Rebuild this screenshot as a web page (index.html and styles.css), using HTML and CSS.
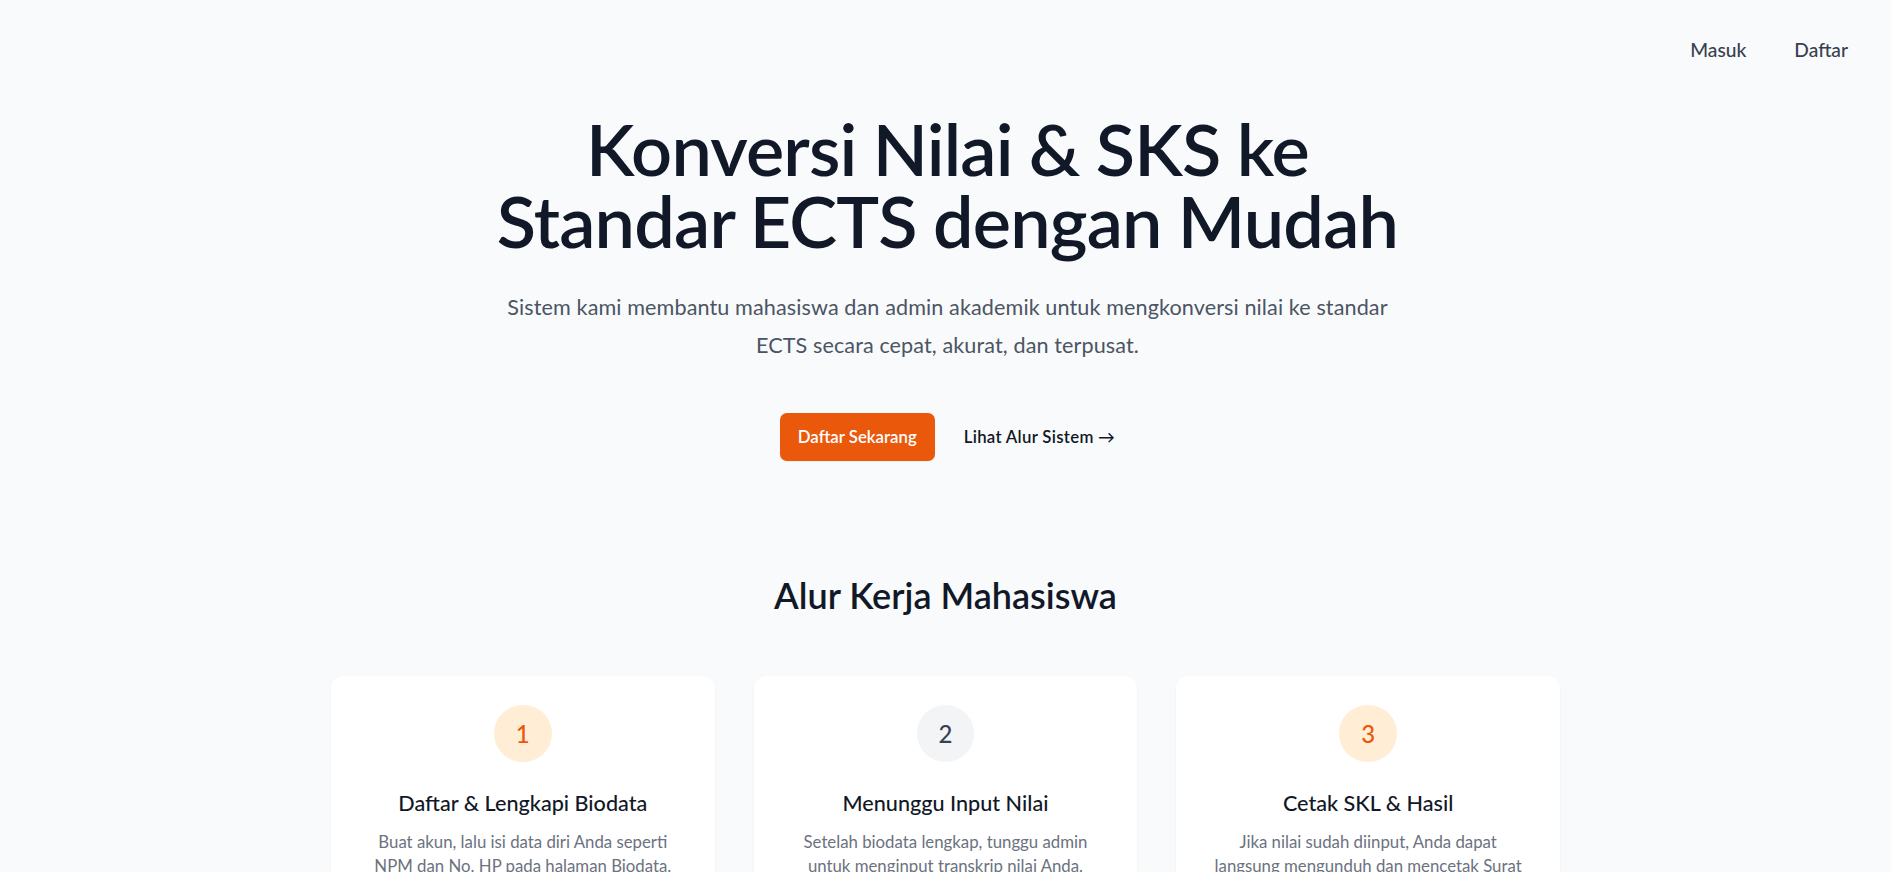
FILE: index.html
```html
<!DOCTYPE html>
<html lang="id">
<head>
<meta charset="utf-8">
<title>Konversi Nilai ECTS</title>
<link rel="stylesheet" href="styles.css">
</head>
<body>
<header class="topbar">
  <nav class="nav">
    <a href="#" class="nav-link">Masuk</a>
    <a href="#" class="nav-link">Daftar</a>
  </nav>
</header>
<main>
  <section class="hero">
    <h1 class="hero-title">Konversi Nilai &amp; SKS ke<br>Standar ECTS dengan Mudah</h1>
    <p class="hero-text">Sistem kami membantu mahasiswa dan admin akademik untuk mengkonversi nilai ke standar ECTS secara cepat, akurat, dan terpusat.</p>
    <div class="hero-actions">
      <a href="#" class="btn-primary">Daftar Sekarang</a>
      <a href="#alur" class="btn-link">Lihat Alur Sistem →</a>
    </div>
  </section>
  <section class="flow" id="alur">
    <h2 class="flow-title">Alur Kerja Mahasiswa</h2>
    <div class="flow-grid">
      <div class="card">
        <div class="step step-accent">1</div>
        <h3 class="card-title">Daftar &amp; Lengkapi Biodata</h3>
        <p class="card-text">Buat akun, lalu isi data diri Anda seperti NPM dan No. HP pada halaman Biodata.</p>
      </div>
      <div class="card">
        <div class="step step-muted">2</div>
        <h3 class="card-title">Menunggu Input Nilai</h3>
        <p class="card-text">Setelah biodata lengkap, tunggu admin untuk menginput transkrip nilai Anda.</p>
      </div>
      <div class="card">
        <div class="step step-accent">3</div>
        <h3 class="card-title">Cetak SKL &amp; Hasil</h3>
        <p class="card-text">Jika nilai sudah diinput, Anda dapat langsung mengunduh dan mencetak Surat Keterangan Lulus dan hasil konversi ECTS.</p>
      </div>
    </div>
  </section>
</main>
</body>
</html>
```
FILE: styles.css
```css
* { box-sizing: border-box; }
html, body { margin: 0; padding: 0; }
body {
  background: #f9fafb;
  font-family: "Lato", "Inter", "Liberation Sans", sans-serif;
  color: #111827;
}
a { text-decoration: none; }

.topbar {
  display: flex;
  justify-content: flex-end;
  padding: 36px 43px 0 0;
}
.nav {
  display: flex;
  gap: 48px;
}
.nav-link {
  font-size: 19.2px;
  line-height: 28.8px;
  color: #374151;
  font-weight: 500;
}

.hero {
  display: flex;
  flex-direction: column;
  align-items: center;
  text-align: center;
  padding-top: 47px;
  padding-left: 4px;
}
.hero-title {
  margin: 0;
  font-size: 72px;
  line-height: 72px;
  font-weight: 600;
  color: #111827;
  letter-spacing: -0.8px;
  word-spacing: -1px;
}
.hero-text {
  margin: 32px 0 0;
  max-width: 922px;
  font-size: 21.6px;
  line-height: 38.4px;
  color: #4b5563;
  letter-spacing: 0.1px;
}
.hero-actions {
  display: flex;
  align-items: center;
  gap: 29px;
  margin-top: 48px;
}
.btn-primary {
  display: inline-block;
  background: #ea580c;
  color: #ffffff;
  font-size: 16.8px;
  line-height: 24px;
  font-weight: 600;
  padding: 12px 18px;
  border-radius: 7px;
  box-shadow: 0 1px 2px rgba(0,0,0,0.06);
}
.btn-link {
  font-size: 16.8px;
  line-height: 24px;
  font-weight: 600;
  color: #111827;
  letter-spacing: 0.3px;
}

.flow {
  display: flex;
  flex-direction: column;
  align-items: center;
  margin-top: 113px;
  padding-bottom: 80px;
}
.flow-title {
  margin: 0;
  font-size: 36px;
  line-height: 43.2px;
  font-weight: 600;
  color: #111827;
}
.flow-grid {
  margin-top: 59px;
  display: grid;
  grid-template-columns: repeat(3, 1fr);
  gap: 39px;
  width: 1229px;
}
.card {
  background: #ffffff;
  border-radius: 12px;
  padding: 29px 31px 34px;
  box-shadow: 0 1px 3px rgba(0,0,0,0.04), 0 1px 2px rgba(0,0,0,0.02);
  display: flex;
  flex-direction: column;
  align-items: center;
  text-align: center;
}
.step {
  width: 57.6px;
  height: 57.6px;
  border-radius: 50%;
  display: flex;
  align-items: center;
  justify-content: center;
  font-size: 24px;
  font-weight: 500;
}
.step-accent { background: #ffedd5; color: #ea580c; }
.step-muted { background: #f3f4f6; color: #374151; }
.card-title {
  margin: 25px 0 0;
  font-size: 21.6px;
  line-height: 33.6px;
  font-weight: 500;
  color: #111827;
}
.card-text {
  margin: 9px 0 0;
  font-size: 16.8px;
  line-height: 24px;
  color: #6b7280;
}
```
